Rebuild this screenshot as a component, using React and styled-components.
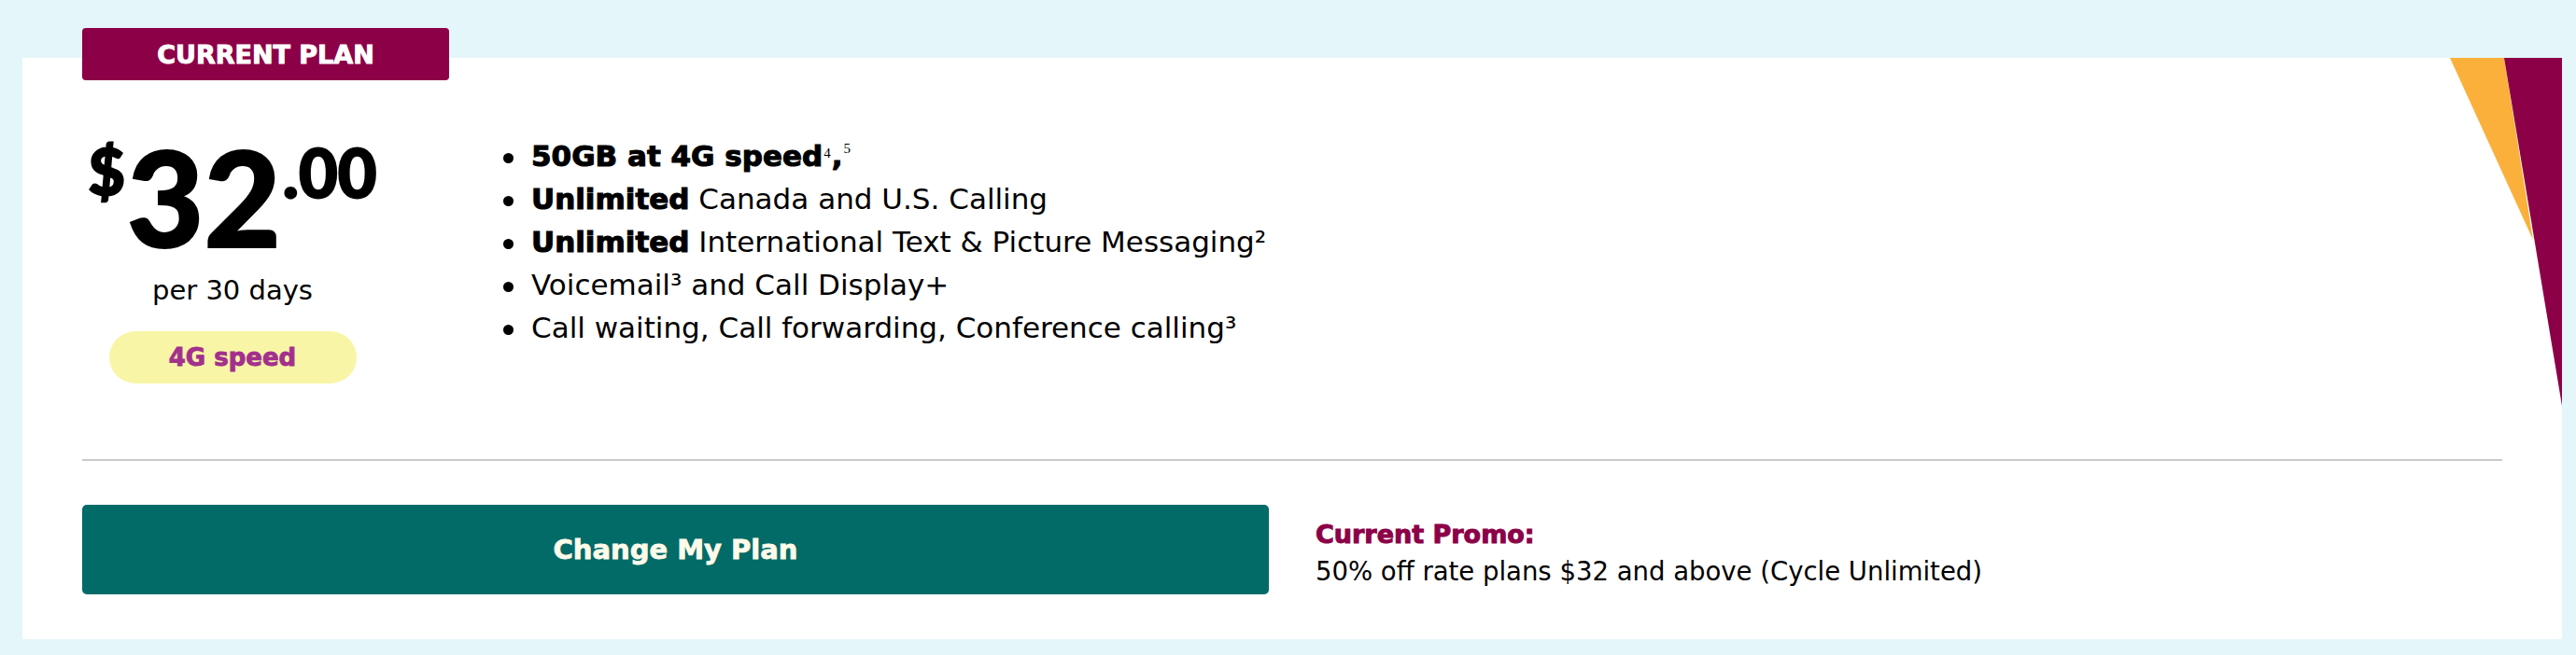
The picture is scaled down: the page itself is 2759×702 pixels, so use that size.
import React from 'react'
import styled, { createGlobalStyle } from 'styled-components'

const MAROON = '#8c0047'
const YELLOW = '#fbb03b'
const TEAL = '#026b67'

const GlobalStyle = createGlobalStyle`
  body {
    margin: 0;
    background: #e4f6f9;
    font-family: "DejaVu Sans", "Open Sans", sans-serif;
    color: #000;
  }
`

const features = [
  { bold: '50GB at 4G speed', notes: true },
  { bold: 'Unlimited', text: ' Canada and U.S. Calling' },
  { bold: 'Unlimited', text: ' International Text & Picture Messaging²' },
  { text: 'Voicemail³ and Call Display+' },
  { text: 'Call waiting, Call forwarding, Conference calling³' },
]

export default function App () {
  return (
    <>
      <GlobalStyle />
      <Page>
        <Card>
          <Badge>CURRENT PLAN</Badge>
          <Corner viewBox='0 0 120 373' aria-hidden='true'>
            <polygon points='0,0 58,0 89,195' fill={YELLOW} />
            <polygon points='58,0 120,0 120,373' fill={MAROON} />
          </Corner>

          <TopRow>
            <PriceCol>
              <Price>
                <Dollar>$</Dollar>
                <Whole>32</Whole>
                <Cents>.00</Cents>
              </Price>
              <PerDays>per 30 days</PerDays>
              <SpeedPill>4G speed</SpeedPill>
            </PriceCol>

            <FeatureList>
              {features.map((f, i) => (
                <Feature key={i}>
                  {f.bold && <Strong>{f.bold}</Strong>}
                  {f.notes && (
                    <>
                      <Note>4</Note><Strong>,</Strong><Note high>5</Note>
                    </>
                  )}
                  {f.text}
                </Feature>
              ))}
            </FeatureList>
          </TopRow>

          <Divider />

          <BottomRow>
            <ChangeButton type='button'>Change My Plan</ChangeButton>
            <Promo>
              <PromoTitle>Current Promo:</PromoTitle>
              <PromoText>50% off rate plans $32 and above (Cycle Unlimited)</PromoText>
            </Promo>
          </BottomRow>
        </Card>
      </Page>
    </>
  )
}

const Page = styled.div`
  padding: 62px 15px 17px 24px;
`

const Card = styled.div`
  position: relative;
  background: #fff;
  padding: 77px 64px 48px 64px;
`

const Badge = styled.div`
  position: absolute;
  top: -32px;
  left: 64px;
  width: 393px;
  height: 56px;
  border-radius: 4px;
  background: ${MAROON};
  color: #fff;
  display: flex;
  align-items: center;
  justify-content: center;
  font-weight: 700;
  font-size: 27px;
  -webkit-text-stroke: 1px #fff;
`

const Corner = styled.svg`
  position: absolute;
  top: 0;
  right: 0;
  width: 120px;
  height: 373px;
`

const TopRow = styled.div`
  display: flex;
  align-items: flex-start;
`

const PriceCol = styled.div`
  width: 322px;
  display: flex;
  flex-direction: column;
  align-items: center;
`

const Price = styled.div`
  display: flex;
  align-items: flex-start;
  font-family: Lato, "DejaVu Sans", sans-serif;
  font-weight: 900;
  line-height: 1;
  -webkit-text-stroke: 2px #000;
`

const Dollar = styled.span`
  font-size: 68px;
  margin-top: 10px;
  margin-right: 2px;
`

const Whole = styled.span`
  font-size: 142px;
`

const Cents = styled.span`
  font-size: 72px;
  margin-top: 9px;
  margin-left: 2px;
`

const PerDays = styled.div`
  margin-top: 13px;
  font-size: 29px;
  line-height: 1.2;
`

const SpeedPill = styled.div`
  margin-top: 26px;
  width: 265px;
  height: 56px;
  border-radius: 28px;
  background: #f8f6a6;
  color: #a3308d;
  display: flex;
  align-items: center;
  justify-content: center;
  font-weight: 700;
  font-size: 26px;
  -webkit-text-stroke: 0.9px #a3308d;
`

const FeatureList = styled.ul`
  list-style: none;
  margin: 5px 0 0 129px;
  padding: 0;
  font-size: 31px;
  line-height: 46px;
`

const Feature = styled.li`
  position: relative;
  padding-left: 30px;
  white-space: nowrap;

  &::before {
    content: '';
    position: absolute;
    left: 0;
    top: 20px;
    width: 11px;
    height: 11px;
    border-radius: 50%;
    background: #000;
  }
`

const Strong = styled.strong`
  font-weight: 700;
  -webkit-text-stroke: 1.1px #000;
`

const Note = styled.sup`
  font-family: "Liberation Serif", serif;
  font-weight: 400;
  font-size: 15px;
  line-height: 0;
  vertical-align: ${({ high }) => (high ? '14px' : '9px')};
  margin: 0 1px;
`

const Divider = styled.hr`
  margin: 81px 0 0 0;
  border: 0;
  height: 2px;
  background: #cacaca;
`

const BottomRow = styled.div`
  margin-top: 47px;
  display: flex;
  align-items: center;
  gap: 50px;
`

const ChangeButton = styled.button`
  width: 1271px;
  height: 96px;
  border: 0;
  border-radius: 5px;
  background: ${TEAL};
  color: #fffbea;
  font-family: "DejaVu Sans", sans-serif;
  font-weight: 700;
  font-size: 29px;
  -webkit-text-stroke: 0.8px #fffbea;
  cursor: pointer;
`

const Promo = styled.div`
  margin-top: 8px;
  display: flex;
  flex-direction: column;
`

const PromoTitle = styled.div`
  color: ${MAROON};
  font-weight: 700;
  font-size: 27px;
  line-height: 38px;
  -webkit-text-stroke: 1px ${MAROON};
`

const PromoText = styled.div`
  font-size: 27.5px;
  line-height: 40px;
`
